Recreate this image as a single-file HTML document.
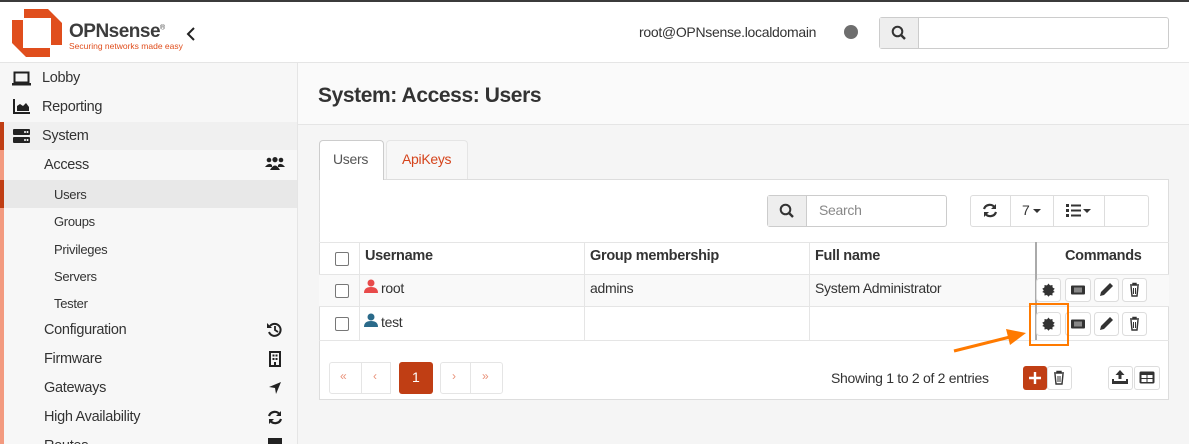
<!DOCTYPE html>
<html><head><meta charset="utf-8">
<style>
*{box-sizing:border-box;margin:0;padding:0}
html,body{width:1189px;height:444px;overflow:hidden}
body{background:#f5f5f5;font-family:"Liberation Sans",sans-serif;font-size:14px;color:#333;position:relative}
.a{position:absolute}
.t{position:absolute;white-space:nowrap;letter-spacing:-0.3px}
.btn{position:absolute;background:#fff;border:1px solid #ddd;border-radius:3px}
</style></head><body>
<div class="a" style="left:0;top:0;width:1189px;height:2px;background:#3b3b3b"></div>
<div class="a" style="left:0;top:2px;width:1189px;height:61px;background:#fff;border-bottom:1px solid #e5e5e5"></div>
<svg class="a" style="left:12px;top:9px" width="50" height="48" viewBox="0 0 50 48">
<path d="M12 0H36L50 14V36H39V14L33 9H12Z" fill="#e04e1d"/>
<path d="M0 11H11V34L17 39H38V48H14L0 34Z" fill="#e04e1d"/>
<rect x="11" y="9" width="28" height="30" fill="#fff"/>
</svg>
<div class="t" style="left:69px;top:21px;font-size:19px;font-weight:bold;color:#3c3c3c;letter-spacing:-0.5px">OPNsense<sup style="font-size:7px;font-weight:normal">®</sup></div>
<div class="t" style="left:69px;top:41px;font-size:8.5px;color:#e04e1d;letter-spacing:0">Securing networks made easy</div>
<svg class="a" style="left:186px;top:27px" width="10" height="14"><path d="M8 1L2 7L8 13" stroke="#222" stroke-width="2" fill="none"/></svg>
<div class="t" style="left:639px;top:24px;font-size:14px;color:#333">root@OPNsense.localdomain</div>
<div class="a" style="left:844px;top:25px;width:14px;height:14px;border-radius:50%;background:#6e6e6e"></div>
<div class="a" style="left:879px;top:17px;width:290px;height:32px;border:1px solid #ccc;border-radius:3px;background:#fff"></div>
<div class="a" style="left:880px;top:18px;width:39px;height:30px;background:#eee;border-right:1px solid #ccc"></div>
<svg class="a" style="left:891px;top:25px" width="16" height="16"><circle cx="6.5" cy="6.5" r="4.8" stroke="#333" stroke-width="2" fill="none"/><path d="M10 10L14 14" stroke="#333" stroke-width="2.4"/></svg>
<div class="a" style="left:0;top:63px;width:298px;height:381px;background:#f7f7f7;border-right:1px solid #e5e5e5"></div>
<div class="a" style="left:0;top:122px;width:297px;height:28px;background:#f0f0f0"></div>
<div class="a" style="left:0;top:180px;width:297px;height:28px;background:#e8e8e8"></div>
<div class="a" style="left:0;top:122px;width:4px;height:322px;background:#f39a7f"></div>
<div class="a" style="left:0;top:122px;width:4px;height:28px;background:#c03e14"></div>
<div class="a" style="left:0;top:180px;width:4px;height:28px;background:#c03e14"></div>
<svg class="a" style="left:12px;top:71px" width="20" height="16"><rect x="2.5" y="1.5" width="14" height="10" stroke="#222" stroke-width="2" fill="none"/><rect x="0" y="12" width="19" height="2.5" fill="#222"/></svg>
<svg class="a" style="left:13px;top:99px" width="18" height="16"><path d="M1 0V14H17" stroke="#222" stroke-width="2" fill="none"/><path d="M4 12V7L7 5L10 7L13 4L16 8V12Z" fill="#222"/></svg>
<svg class="a" style="left:13px;top:128px" width="18" height="16"><rect x="0" y="1" width="17" height="6" rx="1" fill="#222"/><rect x="0" y="9" width="17" height="6" rx="1" fill="#222"/><circle cx="12" cy="4" r="1" fill="#fff"/><circle cx="14.5" cy="4" r="1" fill="#fff"/><circle cx="12" cy="12" r="1" fill="#fff"/><circle cx="14.5" cy="12" r="1" fill="#fff"/></svg>
<div class="t" style="left:42px;top:70px;font-size:14.5px">Lobby</div>
<div class="t" style="left:42px;top:99px;font-size:14.5px">Reporting</div>
<div class="t" style="left:42px;top:128px;font-size:14.5px">System</div>
<div class="t" style="left:44px;top:157px;font-size:14.5px">Access</div>
<div class="t" style="left:54px;top:187px;font-size:13px">Users</div>
<div class="t" style="left:54px;top:214px;font-size:13px">Groups</div>
<div class="t" style="left:54px;top:242px;font-size:13px">Privileges</div>
<div class="t" style="left:54px;top:269px;font-size:13px">Servers</div>
<div class="t" style="left:54px;top:296px;font-size:13px">Tester</div>
<div class="t" style="left:44px;top:322px;font-size:14.5px">Configuration</div>
<div class="t" style="left:44px;top:351px;font-size:14.5px">Firmware</div>
<div class="t" style="left:44px;top:380px;font-size:14.5px">Gateways</div>
<div class="t" style="left:44px;top:409px;font-size:14.5px">High Availability</div>
<div class="t" style="left:44px;top:438px;font-size:14.5px">Routes</div>
<svg class="a" style="left:265px;top:157px" width="20" height="14"><circle cx="4" cy="3" r="2.3" fill="#222"/><circle cx="10" cy="2.6" r="2.6" fill="#222"/><circle cx="16" cy="3" r="2.3" fill="#222"/><path d="M0 10Q4 5 7 8V10ZM13 8Q16 5 20 10H13Z" fill="#222"/><path d="M5 13Q10 4 15 13Z" fill="#222"/></svg>
<svg class="a" style="left:267px;top:322px" width="16" height="16"><path d="M3 4A6 6 0 1 1 2 10" stroke="#222" stroke-width="2" fill="none"/><path d="M0 1V6H5Z" fill="#222"/><path d="M8 4V8L11 10" stroke="#222" stroke-width="1.8" fill="none"/></svg>
<svg class="a" style="left:269px;top:351px" width="12" height="16"><rect x="1" y="1" width="10" height="14" stroke="#222" stroke-width="2" fill="none"/><rect x="3.5" y="3.5" width="2" height="2" fill="#222"/><rect x="6.5" y="3.5" width="2" height="2" fill="#222"/><rect x="3.5" y="7" width="2" height="2" fill="#222"/><rect x="6.5" y="7" width="2" height="2" fill="#222"/><rect x="5" y="11" width="2" height="4" fill="#222"/></svg>
<svg class="a" style="left:268px;top:381px" width="14" height="14"><path d="M13 1L1 6L7 7L8 13Z" fill="#222"/></svg>
<svg class="a" style="left:267px;top:410px" width="16" height="15"><path d="M2 6A6 6 0 0 1 13 5M14 9A6 6 0 0 1 3 10" stroke="#222" stroke-width="2.2" fill="none"/><path d="M14 1V6H9Z M2 14V9H7Z" fill="#222"/></svg>
<div class="a" style="left:268px;top:438px;width:14px;height:6px;background:#222"></div>
<div class="a" style="left:298px;top:63px;width:891px;height:62px;background:#fafafa;border-bottom:1px solid #e5e5e5"></div>
<div class="t" style="left:318px;top:84px;font-size:21px;font-weight:bold;color:#333;letter-spacing:-0.4px">System: Access: Users</div>
<div class="a" style="left:319px;top:140px;width:65px;height:40px;background:#fff;border:1px solid #ccc;border-bottom:none;border-radius:4px 4px 0 0;z-index:2"></div>
<div class="t" style="left:333px;top:151px;font-size:14px;color:#555;z-index:3">Users</div>
<div class="a" style="left:386px;top:140px;width:82px;height:39px;background:#f7f7f7;border:1px solid #e5e5e5;border-bottom:none;border-radius:4px 4px 0 0"></div>
<div class="t" style="left:402px;top:151px;font-size:14px;color:#d5441c">ApiKeys</div>
<div class="a" style="left:319px;top:179px;width:850px;height:221px;background:#fff;border:1px solid #ddd"></div>
<div class="a" style="left:767px;top:195px;width:180px;height:32px;border:1px solid #ccc;border-radius:3px;background:#fff"></div>
<div class="a" style="left:768px;top:196px;width:39px;height:30px;background:#eee;border-right:1px solid #ccc"></div>
<svg class="a" style="left:779px;top:203px" width="16" height="16"><circle cx="6.5" cy="6.5" r="4.8" stroke="#333" stroke-width="2" fill="none"/><path d="M10 10L14 14" stroke="#333" stroke-width="2.4"/></svg>
<div class="t" style="left:819px;top:202px;font-size:14px;color:#888">Search</div>
<div class="a" style="left:970px;top:195px;width:179px;height:32px;border:1px solid #ddd;border-radius:3px;background:#fff"></div>
<div class="a" style="left:1010px;top:196px;width:1px;height:30px;background:#ddd"></div>
<div class="a" style="left:1053px;top:196px;width:1px;height:30px;background:#ddd"></div>
<div class="a" style="left:1104px;top:196px;width:1px;height:30px;background:#ddd"></div>
<svg class="a" style="left:982px;top:203px" width="16" height="15"><path d="M2 6A6 6 0 0 1 13 5M14 9A6 6 0 0 1 3 10" stroke="#333" stroke-width="2.2" fill="none"/><path d="M14 1V6H9Z M2 14V9H7Z" fill="#333"/></svg>
<div class="t" style="left:1022px;top:202px;font-size:14px">7</div>
<svg class="a" style="left:1033px;top:209px" width="8" height="5"><path d="M0 0H8L4 4Z" fill="#333"/></svg>
<svg class="a" style="left:1066px;top:204px" width="26" height="13"><rect x="0" y="0" width="3" height="3" fill="#333"/><rect x="0" y="5" width="3" height="3" fill="#333"/><rect x="0" y="10" width="3" height="3" fill="#333"/><rect x="5" y="0.5" width="10" height="2" fill="#333"/><rect x="5" y="5.5" width="10" height="2" fill="#333"/><rect x="5" y="10.5" width="10" height="2" fill="#333"/><path d="M17 5H25L21 9Z" fill="#333"/></svg>
<div class="a" style="left:319px;top:242px;width:850px;height:1px;background:#e5e5e5"></div>
<div class="a" style="left:319px;top:274px;width:850px;height:33px;background:#f9f9f9;border-top:1px solid #e5e5e5;border-bottom:1px solid #e5e5e5"></div>
<div class="a" style="left:319px;top:340px;width:850px;height:1px;background:#e5e5e5"></div>
<div class="a" style="left:359px;top:242px;width:1px;height:98px;background:#e5e5e5"></div>
<div class="a" style="left:584px;top:242px;width:1px;height:98px;background:#e5e5e5"></div>
<div class="a" style="left:809px;top:242px;width:1px;height:98px;background:#e5e5e5"></div>
<div class="a" style="left:1035px;top:242px;width:2px;height:98px;background:#aaa"></div>
<div class="a" style="left:335px;top:252px;width:14px;height:14px;border:1px solid #777;border-radius:2px;background:#fff"></div>
<div class="a" style="left:335px;top:284px;width:14px;height:14px;border:1px solid #777;border-radius:2px;background:#fff"></div>
<div class="a" style="left:335px;top:317px;width:14px;height:14px;border:1px solid #777;border-radius:2px;background:#fff"></div>
<div class="t" style="left:365px;top:248px;font-size:14.5px;font-weight:bold;color:#333">Username</div>
<div class="t" style="left:590px;top:248px;font-size:14.5px;font-weight:bold;color:#333">Group membership</div>
<div class="t" style="left:815px;top:248px;font-size:14.5px;font-weight:bold;color:#333">Full name</div>
<div class="t" style="left:1065px;top:248px;font-size:14.5px;font-weight:bold;color:#333">Commands</div>
<svg class="a" style="left:364px;top:279px" width="14" height="14"><circle cx="7" cy="4" r="3.5" fill="#e84a4a"/><path d="M0 14Q0 8 7 8Q14 8 14 14Z" fill="#e84a4a"/></svg>
<svg class="a" style="left:364px;top:313px" width="14" height="14"><circle cx="7" cy="4" r="3.5" fill="#2a6a8a"/><path d="M0 14Q0 8 7 8Q14 8 14 14Z" fill="#2a6a8a"/></svg>
<div class="t" style="left:381px;top:280px;font-size:14px">root</div>
<div class="t" style="left:381px;top:314px;font-size:14px">test</div>
<div class="t" style="left:590px;top:280px;font-size:14px">admins</div>
<div class="t" style="left:815px;top:280px;font-size:14px">System Administrator</div>
<svg class="a" style="left:1036px;top:278px" width="112" height="60">
<g id="r">
<rect x="0.5" y="0.5" width="24" height="23" rx="3" fill="#fff" stroke="#ddd"/>
<rect x="29.5" y="0.5" width="25" height="23" rx="3" fill="#fff" stroke="#ddd"/>
<rect x="58.5" y="0.5" width="24" height="23" rx="3" fill="#fff" stroke="#ddd"/>
<rect x="86.5" y="0.5" width="24" height="23" rx="3" fill="#fff" stroke="#ddd"/>
<circle cx="12.5" cy="12" r="5" fill="#333"/>
<path d="M12.5 5.5L14 7.5L16.5 7L16.5 9.5L18.8 10.8L17 12.5L18.8 14L16.5 15L16.5 17.5L14 17L12.5 18.8L11 17L8.5 17.5L8.5 15L6.2 14L8 12.5L6.2 10.8L8.5 9.5L8.5 7L11 7.5Z" fill="#333"/>
<rect x="35" y="7.5" width="14" height="9" rx="1" fill="#333"/><rect x="38" y="9.5" width="8" height="5" fill="#888"/>
<path d="M64 18L65 14L74 5L77 8L68 17Z" fill="#333"/>
<path d="M94 7H103M97 7V5.5H100V7M95 8L96 18H101L102 8" stroke="#333" stroke-width="1.4" fill="none"/><path d="M97.5 10V16M99.5 10V16" stroke="#333"/>
</g>
<svg y="34" width="112" height="26">
<rect x="0.5" y="0.5" width="24" height="23" rx="3" fill="#fff" stroke="#ddd"/>
<rect x="29.5" y="0.5" width="25" height="23" rx="3" fill="#fff" stroke="#ddd"/>
<rect x="58.5" y="0.5" width="24" height="23" rx="3" fill="#fff" stroke="#ddd"/>
<rect x="86.5" y="0.5" width="24" height="23" rx="3" fill="#fff" stroke="#ddd"/>
<circle cx="12.5" cy="12" r="5" fill="#333"/>
<path d="M12.5 5.5L14 7.5L16.5 7L16.5 9.5L18.8 10.8L17 12.5L18.8 14L16.5 15L16.5 17.5L14 17L12.5 18.8L11 17L8.5 17.5L8.5 15L6.2 14L8 12.5L6.2 10.8L8.5 9.5L8.5 7L11 7.5Z" fill="#333"/>
<rect x="35" y="7.5" width="14" height="9" rx="1" fill="#333"/><rect x="38" y="9.5" width="8" height="5" fill="#888"/>
<path d="M64 18L65 14L74 5L77 8L68 17Z" fill="#333"/>
<path d="M94 7H103M97 7V5.5H100V7M95 8L96 18H101L102 8" stroke="#333" stroke-width="1.4" fill="none"/><path d="M97.5 10V16M99.5 10V16" stroke="#333"/>
</svg>
</svg>
<div class="a" style="left:1029px;top:303px;width:40px;height:43px;border:2px solid #ff7a00"></div>
<svg class="a" style="left:950px;top:325px" width="80" height="30"><path d="M4 26L60 12" stroke="#ff7a00" stroke-width="3"/><path d="M76 8L56 4L60 20Z" fill="#ff7a00"/></svg>
<div class="a" style="left:329px;top:362px;width:33px;height:32px;border:1px solid #e5e5e5;border-radius:3px 0 0 3px;background:#fff"></div>
<div class="a" style="left:361px;top:362px;width:30px;height:32px;border:1px solid #e5e5e5;background:#fff"></div>
<div class="t" style="left:340px;top:369px;font-size:12px;color:#e9927a">«</div>
<div class="t" style="left:373px;top:369px;font-size:12px;color:#e9927a">‹</div>
<div class="a" style="left:399px;top:362px;width:34px;height:32px;background:#c03e14;border-radius:3px"></div>
<div class="t" style="left:412px;top:369px;font-size:14px;color:#fff">1</div>
<div class="a" style="left:440px;top:362px;width:31px;height:32px;border:1px solid #e5e5e5;background:#fff;border-radius:3px 0 0 3px"></div>
<div class="a" style="left:470px;top:362px;width:33px;height:32px;border:1px solid #e5e5e5;background:#fff;border-radius:0 3px 3px 0"></div>
<div class="t" style="left:452px;top:369px;font-size:12px;color:#e9927a">›</div>
<div class="t" style="left:482px;top:369px;font-size:12px;color:#e9927a">»</div>
<div class="t" style="left:831px;top:370px;font-size:14px;color:#333">Showing 1 to 2 of 2 entries</div>
<div class="a" style="left:1023px;top:366px;width:24px;height:24px;background:#c03e14;border-radius:3px"></div>
<svg class="a" style="left:1028px;top:371px" width="14" height="14"><path d="M7 1V13M1 7H13" stroke="#fff" stroke-width="2.4"/></svg>
<div class="btn" style="left:1047px;top:366px;width:25px;height:24px"></div>
<svg class="a" style="left:1052px;top:370px" width="14" height="16"><path d="M2 3H12M5 3V1.5H9V3M3 4L4 14H10L11 4" stroke="#333" stroke-width="1.4" fill="none"/><path d="M6 6V12M8 6V12" stroke="#333"/></svg>
<div class="btn" style="left:1108px;top:366px;width:25px;height:24px"></div>
<svg class="a" style="left:1112px;top:369px" width="16" height="16"><path d="M8 1L3.5 6H6.5V10H9.5V6H12.5Z" fill="#333"/><path d="M1 10V14H15V10" stroke="#333" stroke-width="2" fill="none"/><rect x="1" y="12" width="14" height="3" fill="#333"/></svg>
<div class="btn" style="left:1134px;top:366px;width:26px;height:24px"></div>
<svg class="a" style="left:1139px;top:371px" width="16" height="14"><rect x="0.5" y="0.5" width="15" height="12" rx="1.5" fill="#333"/><rect x="2.5" y="4" width="5" height="3" fill="#fff"/><rect x="8.5" y="4" width="5" height="3" fill="#fff"/><rect x="2.5" y="8" width="5" height="3" fill="#fff"/><rect x="8.5" y="8" width="5" height="3" fill="#fff"/></svg>
</body></html>
